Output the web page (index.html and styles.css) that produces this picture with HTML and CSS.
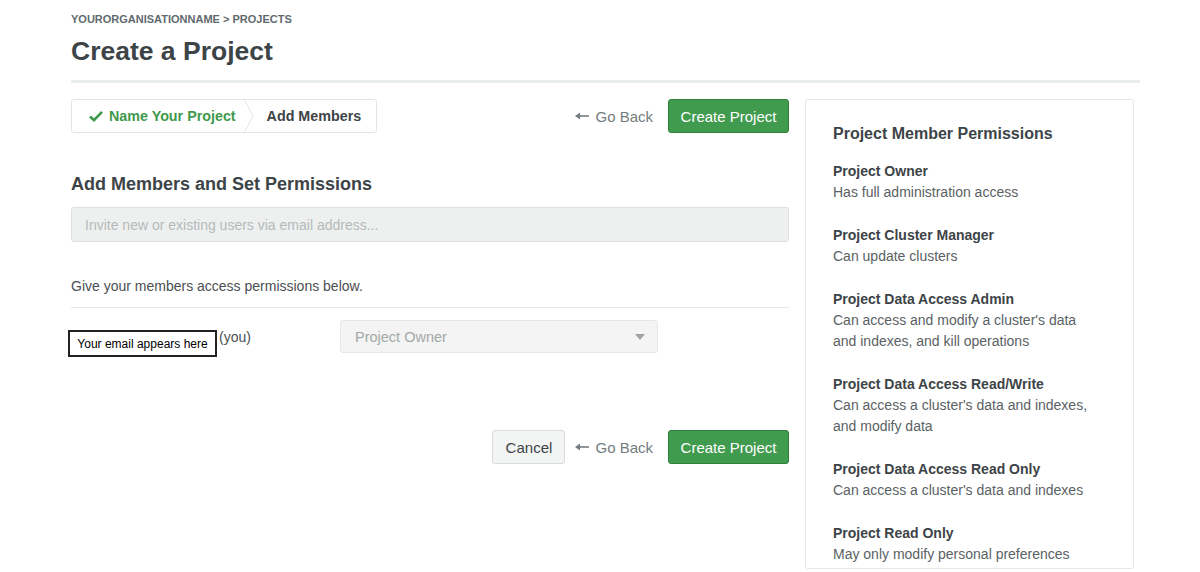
FILE: index.html
```html
<!DOCTYPE html>
<html>
<head>
<meta charset="utf-8">
<link rel="stylesheet" href="styles.css">
</head>
<body>
<div class="page">
  <div class="crumbs">YOURORGANISATIONNAME &gt; PROJECTS</div>
  <h1 class="title">Create a Project</h1>
  <div class="divider"></div>
  <div class="layout">
    <div class="main">
      <div class="toprow">
        <div class="steps">
          <div class="step done">
            <svg class="check" width="14" height="12" viewBox="0 0 14 12"><path d="M1 6.5 L5 10.2 L13 1.8" fill="none" stroke="#3f9a4d" stroke-width="2.6"/></svg>
            <span>Name Your Project</span>
          </div>
          <svg class="chev" width="12" height="34" viewBox="0 0 12 34"><polyline points="1,0 10,17 1,34" fill="none" stroke="#e3e6e6" stroke-width="1"/></svg>
          <div class="step current">Add Members</div>
        </div>
        <div class="actions">
          <span class="goback"><svg class="arrow" width="14" height="8" viewBox="0 0 14 8"><path d="M14 4 H2" stroke="#737d80" stroke-width="1.6"/><polygon points="0,4 5,0.5 5,7.5" fill="#737d80"/></svg>Go Back</span>
          <button class="btn primary">Create Project</button>
        </div>
      </div>
      <h2 class="section">Add Members and Set Permissions</h2>
      <div class="invite">Invite new or existing users via email address...</div>
      <p class="hint">Give your members access permissions below.</p>
      <div class="rule"></div>
      <div class="member">
        <div class="who">
          <span class="email">Your email appears here</span>
          <span class="you">(you)</span>
        </div>
        <div class="select">
          <span>Project Owner</span>
          <svg width="10" height="6" viewBox="0 0 10 6"><polygon points="0,0 10,0 5,6" fill="#9ea3a3"/></svg>
        </div>
      </div>
      <div class="bottomrow">
        <button class="btn secondary">Cancel</button>
        <span class="goback"><svg class="arrow" width="14" height="8" viewBox="0 0 14 8"><path d="M14 4 H2" stroke="#737d80" stroke-width="1.6"/><polygon points="0,4 5,0.5 5,7.5" fill="#737d80"/></svg>Go Back</span>
        <button class="btn primary">Create Project</button>
      </div>
    </div>
    <aside class="side">
      <h3 class="side-title">Project Member Permissions</h3>
      <div class="perm">
        <div class="perm-name">Project Owner</div>
        <div class="perm-desc">Has full administration access</div>
      </div>
      <div class="perm">
        <div class="perm-name">Project Cluster Manager</div>
        <div class="perm-desc">Can update clusters</div>
      </div>
      <div class="perm">
        <div class="perm-name">Project Data Access Admin</div>
        <div class="perm-desc">Can access and modify a cluster's data<br>and indexes, and kill operations</div>
      </div>
      <div class="perm">
        <div class="perm-name">Project Data Access Read/Write</div>
        <div class="perm-desc">Can access a cluster's data and indexes,<br>and modify data</div>
      </div>
      <div class="perm">
        <div class="perm-name">Project Data Access Read Only</div>
        <div class="perm-desc">Can access a cluster's data and indexes</div>
      </div>
      <div class="perm">
        <div class="perm-name">Project Read Only</div>
        <div class="perm-desc">May only modify personal preferences</div>
      </div>
    </aside>
  </div>
</div>
</body>
</html>
```

FILE: styles.css
```css
* { box-sizing: border-box; }
html, body { margin: 0; background: #fff; }
body {
  font-family: "Liberation Sans", Arial, sans-serif;
  color: #3d4447;
  width: 1200px;
  height: 572px;
  overflow: hidden;
}
.page { padding: 12px 60px 0 71px; }
.crumbs {
  font-size: 11px;
  line-height: 14px;
  font-weight: 700;
  color: #5f6a6e;
}
.title {
  margin: 9px 0 0;
  font-size: 26.5px;
  line-height: 32px;
  font-weight: 700;
  color: #3d4447;
}
.divider {
  margin-top: 13px;
  height: 3px;
  background: #e8ecea;
}
.layout {
  display: flex;
  gap: 16px;
  margin-top: 16px;
}
.main { width: 718px; flex: none; }
.toprow {
  display: flex;
  justify-content: space-between;
  align-items: center;
  height: 34px;
}
.steps {
  display: flex;
  align-items: center;
  height: 34px;
  width: 306px;
  border: 1px solid #e3e6e6;
  border-radius: 3px;
  font-size: 14.3px;
  font-weight: 700;
}
.step { display: flex; align-items: center; height: 100%; }
.step.done { padding-left: 17px; color: #3f9a4d; gap: 6px; }
.step.done span { padding-right: 7px; }
.chev { flex: none; }
.step.current { padding-left: 12px; color: #3d4447; }
.actions { display: flex; align-items: center; gap: 15px; }
.goback {
  font-size: 15px;
  color: #737d80;
  white-space: nowrap;
  display: inline-flex;
  align-items: center;
}
.goback .arrow { margin-right: 6px; flex: none; }
.btn {
  font-family: "Liberation Sans", Arial, sans-serif;
  font-size: 15px;
  height: 34px;
  border-radius: 3px;
  padding: 0;
  white-space: nowrap;
  cursor: pointer;
}
.btn.primary {
  background: #419b4f;
  border: 1px solid #327f3e;
  color: #fff;
  width: 121px;
}
.btn.secondary {
  background: #f3f4f4;
  border: 1px solid #d9dcdc;
  color: #3d4447;
  width: 73px;
}
.section {
  margin: 39px 0 0;
  font-size: 18px;
  line-height: 24px;
  font-weight: 700;
  color: #3d4447;
}
.invite {
  margin-top: 11px;
  height: 35px;
  background: #eef0ef;
  border: 1px solid #dde0df;
  border-radius: 3px;
  padding: 0 13px;
  display: flex;
  align-items: center;
  font-size: 14px;
  color: #b5baba;
}
.hint {
  margin: 34px 0 0;
  font-size: 14px;
  line-height: 20px;
  color: #4a4f51;
}
.rule {
  margin-top: 11px;
  height: 1px;
  background: #e6e8e8;
}
.member {
  display: flex;
  align-items: flex-start;
  margin-top: 12px;
}
.who {
  display: flex;
  align-items: flex-start;
  width: 272px;
  margin-left: -3px;
}
.email {
  margin-top: 10px;
  width: 149px;
  height: 27px;
  border: 2px solid #222;
  font-size: 12px;
  color: #000;
  display: flex;
  align-items: center;
  justify-content: center;
}
.you {
  margin-left: 2px;
  margin-top: 9px;
  font-size: 14px;
  color: #4a4f51;
}
.select {
  width: 318px;
  height: 33px;
  background: #f3f4f3;
  border: 1px solid #e6e8e8;
  border-radius: 3px;
  padding: 0 12px 0 14px;
  display: flex;
  align-items: center;
  justify-content: space-between;
  font-size: 14.5px;
  color: #a3a8a8;
}
.bottomrow {
  display: flex;
  justify-content: flex-end;
  align-items: center;
  gap: 15px;
  margin-top: 73px;
}
.bottomrow .btn.secondary { margin-right: -5px; }
.side {
  width: 329px;
  flex: none;
  height: 470px;
  border: 1px solid #e6e8e8;
  border-radius: 3px;
  padding: 23px 20px 0 27px;
}
.side-title {
  margin: 0 0 16px;
  font-size: 16px;
  line-height: 22px;
  font-weight: 700;
  color: #3d4447;
}
.perm { margin-bottom: 22px; }
.perm-name {
  font-size: 14px;
  line-height: 21px;
  font-weight: 700;
  color: #3d4447;
}
.perm-desc {
  font-size: 14px;
  line-height: 21px;
  color: #5a6264;
}
```
